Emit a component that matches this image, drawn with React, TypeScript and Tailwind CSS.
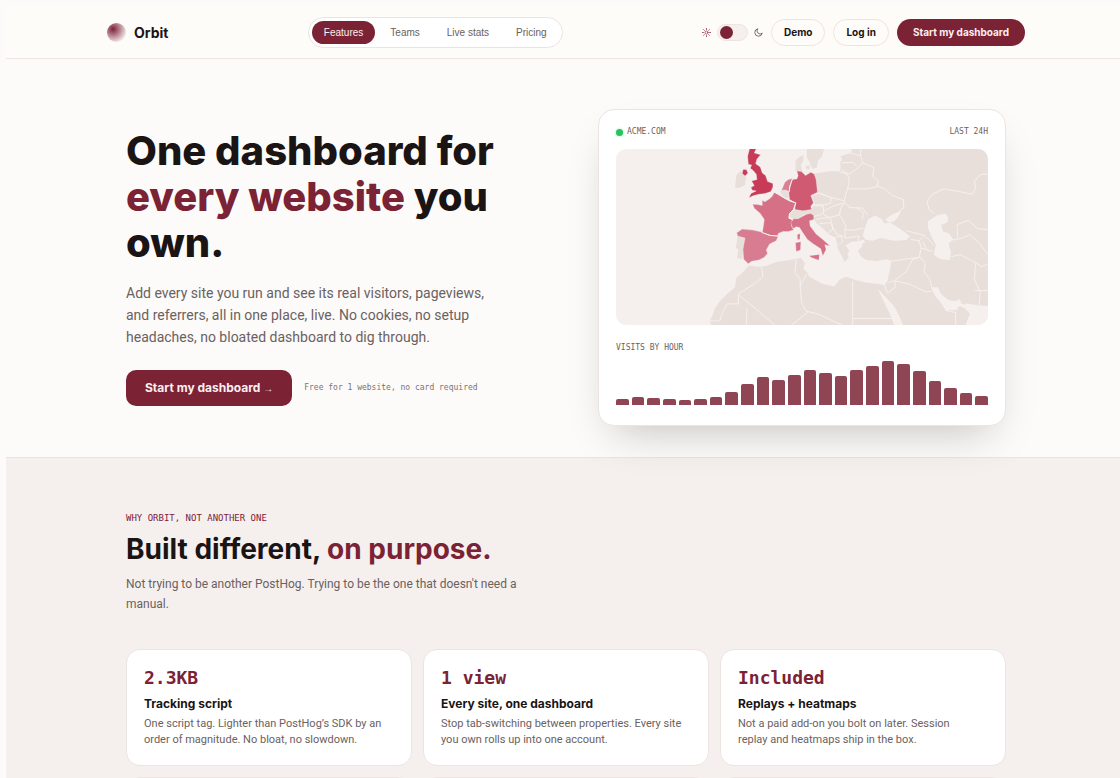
import React from "react";

const links = ["Features", "Teams", "Live stats", "Pricing"];

const hours = [6, 8, 7, 6, 5, 6, 8, 13, 21, 28, 25, 30, 35, 32, 29, 35, 39, 44, 41, 34, 24, 17, 12, 9];

const reasons = [
    {
        stat: "2.3KB",
        title: "Tracking script",
        text: "One script tag. Lighter than PostHog’s SDK by an order of magnitude. No bloat, no slowdown.",
    },
    {
        stat: "1 view",
        title: "Every site, one dashboard",
        text: "Stop tab-switching between properties. Every site you own rolls up into one account.",
    },
    {
        stat: "Included",
        title: "Replays + heatmaps",
        text: "Not a paid add-on you bolt on later. Session replay and heatmaps ship in the box.",
    },
];

function VisitorMap() {
    return (
        <svg viewBox="18 28 1119 528" className="block w-full rounded-[10px] bg-[#f5f0ee]" role="img" aria-label="Visitors by country">
            {/* land */}
            <g fill="#e8dfdb">
                <path d="M592 28H644L638 50 626 62 622 84 608 88 600 66 592 54Z" />
                <path d="M558 92 558 62 572 50 582 46 582 60 574 78 578 94 564 98Z" />
                <path d="M588 80 602 76 600 90 590 88Z" />
                <path d="M398 96 404 108 410 112 406 136 392 144 376 146 378 124 380 106 390 96Z" />
                <path d="M510 156 520 150 538 152 542 168 534 178 520 172Z" />
                <path d="M384 290 406 296 402 330 398 360 382 356 386 330 378 326Z" />
                <path d="M536 228 550 212 578 210 614 208 626 224 600 226 582 226 570 236 548 238Z" />
                <path d="M612 102 640 98 664 94 690 96 694 84 692 66 698 62 694 50 712 44 726 38 728 28H1137V500L1104 498 1070 492 1068 500 1086 518 1078 534 1070 558H304L300 545 308 530 314 510 330 486 352 464 376 444 380 416 398 400 418 378 440 382 470 380 500 368 540 362 574 356 586 370 582 388 592 398 600 412 640 434 674 442 692 420 710 412 746 424 774 430 810 434 826 438 834 426 842 392 846 364 832 360 800 366 770 362 754 350 746 334 760 318 750 306 728 306 708 318 720 334 714 344 718 354 706 368 698 352 686 330 682 310 678 294 660 286 634 262 620 250 614 238 612 226 606 208 616 190 604 168 624 158 620 120Z" />
            </g>

            {/* inland seas */}
            <g fill="#f5f0ee">
                <path d="M766 268 776 240 796 228 814 236 826 252 842 248 872 268 902 290 892 302 854 304 814 296 790 304 770 302 760 290Z" />
                <path d="M828 240 850 224 876 214 866 234 854 246 838 248Z" />
                <path d="M746 306 762 300 768 310 750 316Z" />
                <path d="M956 246 982 228 1010 222 1018 236 1014 250 996 256 1002 276 1022 284 1032 300 1018 312 1026 340 1022 362 994 360 974 346 980 316 966 290 956 264Z" />
                <path d="M966 444 986 444 996 464 1018 482 1040 486 1052 480 1058 494 1104 500 1140 500V560H1070L1084 524 1066 506 1050 500 1038 512 1010 514 994 488 978 470Z" />
                <path d="M806 450 826 470 854 500 870 530 882 560H856L840 520 822 484Z" />
            </g>

            {/* borders */}
            <g fill="none" stroke="#f5f0ee" strokeWidth="3" strokeLinejoin="round">
                <path d="M690 96 714 104 720 124 714 150 704 184 666 174 624 160" />
                <path d="M714 148 770 148 802 142 808 124 790 110 794 84 760 70 742 88 720 104 696 90" />
                <path d="M696 70 730 68 742 78M720 40 754 48 760 70M754 28V48" />
                <path d="M802 138 826 148 850 168 882 180 884 204 870 214M704 184 720 204 760 206 776 228M742 204 764 222 758 240" />
                <path d="M606 170 630 160 666 176 662 192 642 196 612 196M594 212 614 198 642 200 642 222 612 232" />
                <path d="M642 216 670 200 704 190 694 206 690 226 662 234 642 226M690 226 698 238 710 260 706 270 730 272 762 266" />
                <path d="M662 234 670 264 682 284 700 290 708 296 750 290M620 240 642 236 662 234M630 252 666 250 670 270 654 282M678 294 694 290 700 306 686 318M706 270 708 296M750 290 746 306" />
                <path d="M890 274 916 280 946 288M904 300 930 304 946 288 974 316M930 304 936 326 970 336M940 306 952 330" />
                <path d="M936 326 930 354 870 362 846 366M932 354 910 360 892 396 856 424 838 430M856 424 900 434 950 458 968 456M932 352 948 372 944 398 962 420 968 446" />
                <path d="M826 438 834 462 858 444 856 424M1010 514 1040 520 1040 558M1040 516 1052 496" />
                <path d="M730 426V558M730 538H850" />
                <path d="M560 360 556 400 572 420 572 440 592 404M572 434 576 490 590 516 626 524 670 545 700 558M545 558 594 520" />
                <path d="M456 382 460 412 440 430 386 464V494H352L340 516 330 545H292M386 466 440 510 496 558M410 558 412 508" />
                <path d="M976 222 960 210 954 186 970 164 1004 148 1050 156 1090 164 1100 144 1096 124 1116 104 1137 104" />
                <path d="M1046 294 1044 256 1078 242 1106 268 1137 270M1030 302 1060 296 1082 286 1110 310 1137 346" />
                <path d="M1026 352 1054 346 1100 370 1096 420 1114 460 1110 498M1100 370 1118 382 1137 374M1098 454H1137" />
            </g>

            {/* countries with traffic */}
            <g stroke="#f5f0ee" strokeWidth="1" strokeLinejoin="round">
                <path fill="#c73a58" d="M420 26H440L434 40 453 45 442 58 438 72 452 82 458 100 468 108 474 126 490 132 490 142 484 156 466 162 448 164 432 168 418 175 424 162 440 154 428 152 424 144 434 138 426 124 442 120 440 104 430 92 422 86 426 76 416 74 414 50Z" />
                <path fill="#c73a58" d="M400 90 410 90 415 100 406 109 398 102Z" />
                <path fill="#d98095" d="M516 152 526 128 536 120 549 117 547 134 540 142 540 156 528 151Z" />
                <path fill="#d57086" d="M429 194 444 195 458 198 458 182 466 187 480 178 488 170 494 158 508 164 524 176 540 184 558 190 552 210 540 222 538 236 548 240 546 260 552 272 536 276 520 276 506 282 504 290 484 288 458 280 462 256 464 240 452 222 434 206Z" />
                <path fill="#cf5a72" d="M562 94 576 96 588 108 604 98 614 103 620 120 624 158 604 168 612 190 604 200 606 210 580 214 556 210 558 190 540 180 538 160 540 150 548 120 562 118 566 108Z" />
                <path fill="#d57086" d="M544 250 552 238 566 238 580 230 592 224 604 222 613 228 613 240 600 244 602 260 620 284 640 300 662 320 646 316 650 330 640 350 634 328 612 314 594 300 580 280 570 264 560 262 550 268Z" />
                <path fill="#d57086" d="M558 310 574 307 573 332 560 336ZM563 286 572 282 571 300 564 300ZM600 349 630 345 628 363 604 354Z" />
                <path fill="#d87d91" d="M381 280 398 269 430 272 456 278 480 288 506 290 500 304 480 314 470 332 474 342 464 354 448 362 426 366 416 373 402 360 400 330 406 296 384 290Z" />
                <path fill="none" strokeWidth="3" d="M456 279 482 288 506 290M559 190 552 210 540 222 538 236 548 240M494 158 540 184 559 190M549 118 540 142 540 156" />
            </g>
        </svg>
    );
}

function Header() {
    return (
        <header className="mt-1.5 border-b border-[#f0e4e3] bg-[#fefcf9]">
            <div className="mx-auto flex h-[52px] max-w-[918px] items-center justify-between">
                <a href="#" className="flex items-center gap-2 text-[14px] font-bold">
                    <span className="size-[19px] rounded-full bg-[radial-gradient(circle_at_32%_32%,#7b2235_0%,#b98591_38%,#f5f0ee_78%)]"></span>
                    Orbit
                </a>

                <nav className="flex gap-[3px] rounded-full border border-[#ede4e2] bg-white p-[3px] font-['Liberation_Sans',sans-serif] text-[10px] text-[#6b6160]">
                    {links.map((link, i) => (
                        <a
                            key={link}
                            href="#"
                            className={i === 0 ? "rounded-full bg-[#7b2235] px-3 py-1 leading-[15px] text-[#fbeef0]" : "rounded-full px-3 py-1 leading-[15px]"}
                        >
                            {link}
                        </a>
                    ))}
                </nav>

                <div className="flex items-center gap-2 text-[10px] font-bold">
                    <label className="flex items-center gap-1.5">
                        <svg className="size-[9px] text-[#a04a5a]" viewBox="0 0 24 24" fill="none" stroke="currentColor" strokeWidth="2.4" strokeLinecap="round">
                            <circle cx="12" cy="12" r="4" />
                            <path d="M12 1v3M12 20v3M1 12h3M20 12h3M4.2 4.2l2.1 2.1M17.7 17.7l2.1 2.1M4.2 19.8l2.1-2.1M17.7 6.3l2.1-2.1" />
                        </svg>
                        <input type="checkbox" aria-label="Dark mode" className="sr-only" />
                        <span className="flex h-[17px] w-[31px] items-center rounded-full border border-[#ede4e2] bg-[#f5f0ee] px-0.5">
                            <span className="size-[13px] rounded-full bg-[#7b2235]"></span>
                        </span>
                        <svg className="size-[9px] text-[#6b6160]" viewBox="0 0 24 24" fill="none" stroke="currentColor" strokeWidth="2.4" strokeLinejoin="round">
                            <path d="M22 13.5A10 10 0 1 1 10.500 2a8 8 0 0 0 11.500 11.500z" />
                        </svg>
                    </label>
                    <button className="h-[27px] rounded-full border border-[#ede4e2] px-3">Demo</button>
                    <button className="h-[27px] rounded-full border border-[#ede4e2] px-3">Log in</button>
                    <button className="h-[27px] rounded-full bg-[#7b2235] px-4 text-[#fbeef0]">Start my dashboard</button>
                </div>
            </div>
        </header>
    );
}

function LiveCard() {
    return (
        <div className="rounded-[16px] border border-[#ede4e2] bg-white px-[17px] pt-4 pb-5 font-['DejaVu_Sans_Mono',monospace] text-[8px] text-[#6b6160] shadow-[0_20px_40px_-16px_rgba(26,20,20,0.25)]">
            <div className="flex items-center justify-between leading-3">
                <span className="flex items-center gap-1">
                    <span className="size-[7px] rounded-full bg-[#22c55e] shadow-[0_0_3px_#22c55e66]"></span>
                    ACME.COM
                </span>
                <span>LAST 24H</span>
            </div>
            <div className="mt-[11px]">
                <VisitorMap />
            </div>
            <div className="mt-[17px] leading-3">VISITS BY HOUR</div>
            <div className="mt-[7px] flex h-11 items-end gap-[3px]">
                {hours.map((h, i) => (
                    <div key={i} className="flex-1 rounded-t-[2px] bg-[#8f4554]" style={{ height: h }}></div>
                ))}
            </div>
        </div>
    );
}

export default function App() {
    return (
        <div className="h-screen overflow-hidden bg-[#fcfbfa] font-[Inter,sans-serif] text-[#1a1414]">
            <div className="-mr-1.5 ml-1.5">
                <Header />

                <section className="mx-auto grid max-w-[880px] grid-cols-2 items-center gap-16 pt-[50px] pb-[31px]">
                    <div>
                        <h1 className="text-[40px] leading-[46px] font-extrabold">
                            One dashboard for <span className="text-[#7b2235]">every website</span> you own.
                        </h1>
                        <p className="mt-4 max-w-[380px] font-[Roboto,sans-serif] text-[14px] leading-[22px] text-[#6b6160]">
                            Add every site you run and see its real visitors, pageviews, and referrers, all in one place, live. No cookies, no setup
                            headaches, no bloated dashboard to dig through.
                        </p>
                        <div className="mt-[22px] flex items-center gap-3">
                            <button className="h-9 rounded-[10px] bg-[#7b2235] px-[19px] text-[12px] font-bold text-[#fbeef0]">
                                Start my dashboard <span className="font-['Liberation_Sans',sans-serif] text-[10px]">→</span>
                            </button>
                            <span className="font-['DejaVu_Sans_Mono',monospace] text-[8px] text-[#7d7271]">Free for 1 website, no card required</span>
                        </div>
                    </div>
                    <LiveCard />
                </section>

                <section className="border-t border-[#ede4e2] bg-[#f5f0ee] pt-[54px]">
                    <div className="mx-auto max-w-[880px]">
                        <div className="font-['DejaVu_Sans_Mono',monospace] text-[9px] leading-3 text-[#7b2235]">WHY ORBIT, NOT ANOTHER ONE</div>
                        <h2 className="mt-2 text-[28px] leading-[34px] font-bold">
                            Built different, <span className="text-[#7b2235]">on purpose.</span>
                        </h2>
                        <p className="mt-2 max-w-[416px] font-[Roboto,sans-serif] text-[12px] leading-5 text-[#6b6160]">
                            Not trying to be another PostHog. Trying to be the one that doesn't need a manual.
                        </p>

                        <div className="mt-[35px] grid grid-cols-3 gap-[11px]">
                            {reasons.map((r) => (
                                <article key={r.title} className="rounded-[14px] border border-[#ede4e2] bg-white px-[17px] pt-4 pb-[17px]">
                                    <div className="font-['DejaVu_Sans_Mono',monospace] text-[18px] leading-6 font-bold text-[#7b2235]">{r.stat}</div>
                                    <h3 className="mt-1.5 text-[12px] leading-4 font-bold">{r.title}</h3>
                                    <p className="mt-1 pr-2 font-[Roboto,sans-serif] text-[11px] leading-4 text-[#6b6160]">{r.text}</p>
                                </article>
                            ))}
                            <div className="h-24 rounded-[14px] border border-[#ede4e2] bg-white"></div>
                            <div className="h-24 rounded-[14px] border border-[#ede4e2] bg-white"></div>
                            <div className="h-24 rounded-[14px] border border-[#ede4e2] bg-white"></div>
                        </div>
                    </div>
                </section>
            </div>
        </div>
    );
}
